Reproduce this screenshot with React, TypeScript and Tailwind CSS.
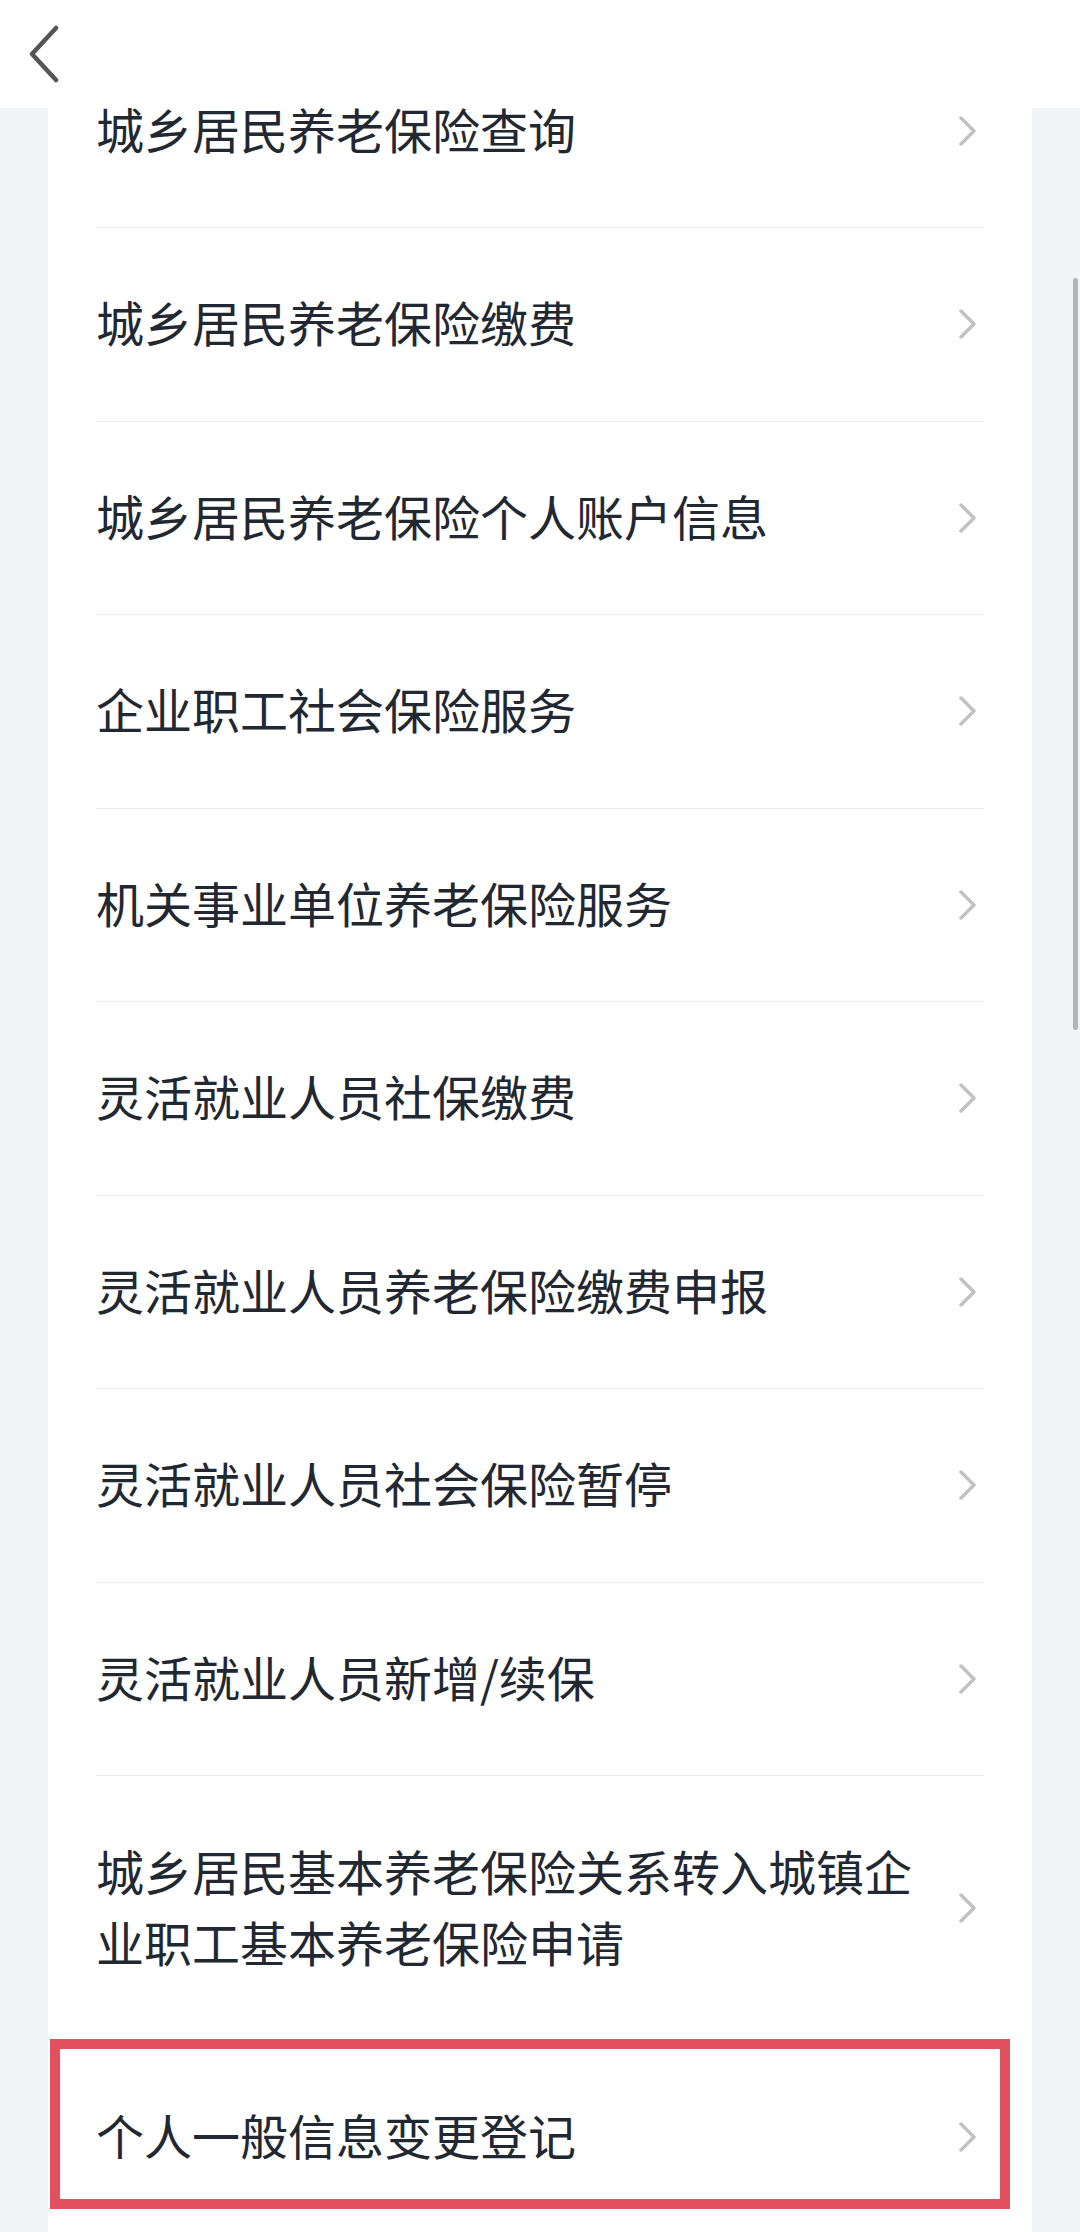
import { ChevronRight } from 'lucide-react';

const items = [
  '城乡居民养老保险查询',
  '城乡居民养老保险缴费',
  '城乡居民养老保险个人账户信息',
  '企业职工社会保险服务',
  '机关事业单位养老保险服务',
  '灵活就业人员社保缴费',
  '灵活就业人员养老保险缴费申报',
  '灵活就业人员社会保险暂停',
  '灵活就业人员新增/续保',
  '城乡居民基本养老保险关系转入城镇企业职工基本养老保险申请',
  '个人一般信息变更登记',
];

const font = { fontFamily: '"Noto Sans CJK SC", "Noto Sans", sans-serif' };

function BackIcon() {
  return (
    <svg width="32" height="58" viewBox="0 0 32 58" fill="none">
      <path d="M28 3 L4 29 L28 55" stroke="#555" strokeWidth="4.5" strokeLinecap="round" strokeLinejoin="round" />
    </svg>
  );
}

function Chevron() {
  return (
    <svg width="20" height="30" viewBox="0 0 20 30" fill="none">
      <path d="M3 2 L16 15 L3 28" stroke="#c2c2c2" strokeWidth="3.5" strokeLinecap="round" strokeLinejoin="round" />
    </svg>
  );
}

function Row({ label, highlight, last }: { label: string; highlight?: boolean; last?: boolean }) {
  const long = label.length > 17;
  return (
    <div
      className={`relative flex items-center ${long ? 'h-[264px]' : 'h-[193.5px]'} ${last ? '' : 'border-b border-[#ececec]'}`}
    >
      <div className="flex-1 min-w-0 pr-[20px] pb-[5px] text-[48px] leading-[71px] text-[#222831]">{label}</div>
      <div className="flex items-center pr-[6px]">
        <Chevron />
      </div>
      {highlight && (
        <div className="absolute left-[-46px] top-[-1px] w-[960px] h-[170px] border-[10px] border-[#e0505e] pointer-events-none" />
      )}
    </div>
  );
}

export default function App() {
  return (
    <div className="relative h-[2232px] overflow-hidden bg-[#f3f4f8]" style={font}>
      {/* header */}
      <div className="absolute top-0 inset-x-0 z-10 h-[108px] bg-white flex items-center pl-[28px]">
        <BackIcon />
      </div>

      {/* scrollbar */}
      <div className="absolute right-[2px] top-[278px] z-10 w-[5px] h-[752px] rounded-full bg-[#b4b4b8]" />

      <div className="pt-[34.5px] px-[48px]">
        <div className="bg-white px-[48px]">
          {items.map((label, i) => (
            <Row key={label} label={label} highlight={i === items.length - 1} last={i >= items.length - 2} />
          ))}
        </div>
      </div>
    </div>
  );
}
